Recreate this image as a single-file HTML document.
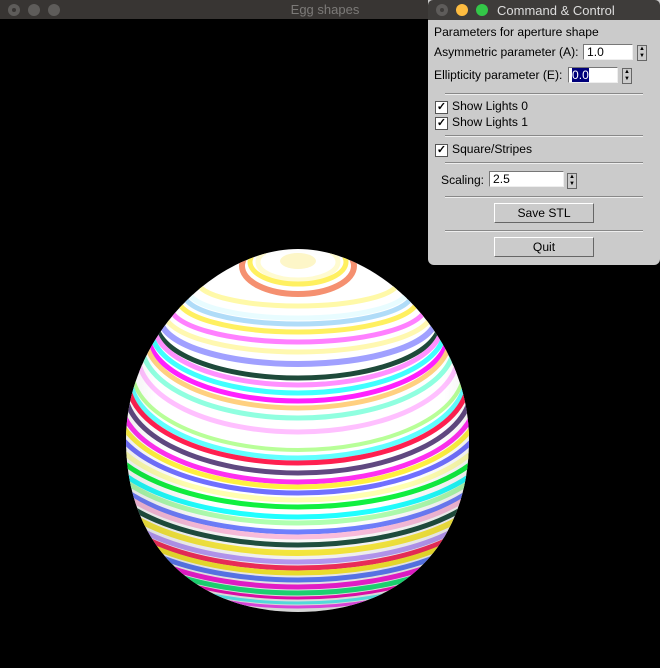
<!DOCTYPE html>
<html><head><meta charset="utf-8"><style>
body{margin:0;width:660px;height:668px;background:#000;position:relative;overflow:hidden;font-family:"Liberation Sans",sans-serif}
.tb{position:absolute;left:0;top:0;width:660px;height:19px;background:#383533}
.dot{position:absolute;top:4px;width:12px;height:12px;border-radius:50%;background:#5e5c5a}
.t1{position:absolute;left:0;width:660px;top:2px;text-align:center;color:#7c7a78;font-size:13px}
#cc{position:absolute;left:428px;top:0;width:232px;height:265px;background:#cbcbcb;border-radius:0 0 6px 6px;font-size:12.1px;color:#000}
#cc .bar{position:absolute;left:0;top:0;width:232px;height:20px;background:#3e3c3a;border-radius:5px 5px 0 0}
.l{position:absolute;white-space:nowrap}
.in{position:absolute;height:16px;background:#fff;border:1px solid #777;border-right-color:#eee;border-bottom-color:#eee;font-size:12.1px;line-height:15px;padding-left:3px;box-sizing:border-box}
.sp{position:absolute;width:10px;height:16px;background:#ccc;border:1px solid #666;box-sizing:border-box;font-size:6px;line-height:7px;text-align:center}
.hr{position:absolute;left:17px;width:198px;height:1px;background:#888;border-bottom:1px solid #eee}
.cb{position:absolute;left:7px;width:11px;height:11px;background:#fff;border:1px solid #555;font-size:11px;line-height:11px;text-align:center;font-weight:bold}
.btn{position:absolute;left:66px;width:100px;height:20px;border:1px solid #666;border-top-color:#fff;border-left-color:#fff;box-sizing:border-box;text-align:center;line-height:18px;background:#cbcbcb}
</style></head><body>
<div class="tb">
<div class="dot" style="left:8px"><div style="position:absolute;left:4px;top:4px;width:4px;height:4px;border-radius:50%;background:#383533"></div></div>
<div class="dot" style="left:28px"></div><div class="dot" style="left:48px"></div>
<div class="t1" style="left:-5px">Egg shapes</div>
</div>
<svg width="660" height="668" style="position:absolute;left:0;top:0">
<defs>
<clipPath id="egg"><path d="M298,249 C218,249 126,335 126,440 C126,545 195,612 298,612 C401,612 469,545 469,440 C469,335 378,249 298,249 Z"/></clipPath>
<radialGradient id="sh" cx="0.5" cy="0.4" r="0.6"><stop offset="0.6" stop-color="#000" stop-opacity="0"/><stop offset="1" stop-color="#000" stop-opacity="0.18"/></radialGradient>
</defs>
<g clip-path="url(#egg)">
<rect x="100" y="240" width="400" height="380" fill="#fff"/>
<ellipse cx="298" cy="261" rx="18" ry="8" fill="#fdf6c8"/>
<g fill="none" stroke-width="5">
<ellipse cx="298" cy="262" rx="40" ry="18" stroke="#fffbd0" />
<ellipse cx="298" cy="262" rx="48" ry="22" stroke="#fff060" />
<ellipse cx="298" cy="266" rx="56" ry="28" stroke="#f59070" stroke-width="6"/>
<path d="M198,282 A100 24 0 0 0 398,282" stroke="#fff9a8"/>
<path d="M188,290 A110 28 0 0 0 408,290" stroke="#e8fcff"/>
<path d="M184,294 A114 30 0 0 0 412,294" stroke="#b0dcf8"/>
<path d="M178,299 A120 33 0 0 0 418,299" stroke="#fff060"/>
<path d="M170,306 A128 36 0 0 0 426,306" stroke="#ff80ff"/>
<path d="M164,312 A134 40 0 0 0 432,312" stroke="#fff8b0"/>
<path d="M160,318 A138 46 0 0 0 436,318" stroke="#a0a0ff" stroke-width="6"/>
<path d="M156,322 A142 56 0 0 0 440,322" stroke="#1e4a3a" stroke-width="5"/>
<path d="M154,325 A144 60 0 0 0 442,325" stroke="#ff90ff"/>
<path d="M151,329 A147 64 0 0 0 445,329" stroke="#40ffff"/>
<path d="M148,334 A150 67 0 0 0 448,334" stroke="#ff20ff" stroke-width="5"/>
<path d="M146,338 A152 70 0 0 0 450,338" stroke="#ffd080"/>
<path d="M142,345 A156 73 0 0 0 454,345" stroke="#90ffe0"/>
<path d="M138,355 A160 77 0 0 0 458,355" stroke="#ffc0ff"/>
<path d="M132,370 A166 80 0 0 0 464,370" stroke="#b8ff98" stroke-width="4"/>
<path d="M130,376 A168 82 0 0 0 466,376" stroke="#60ffff"/>
<path d="M128,381 A170 82 0 0 0 468,381" stroke="#ff2050"/>
<path d="M125,390 A173 83 0 0 0 471,390" stroke="#604880" stroke-width="5"/>
<path d="M120,398 A178 84 0 0 0 476,398" stroke="#ff30f0"/>
<path d="M116,403 A182 84 0 0 0 480,403" stroke="#fff040"/>
<path d="M110,409 A188 84 0 0 0 486,409" stroke="#7070ff"/>
<path d="M105,416 A193 84 0 0 0 491,416" stroke="#ffffb0"/>
<path d="M100,423 A198 84 0 0 0 496,423" stroke="#10f040"/>
<path d="M98,433 A200 84 0 0 0 498,433" stroke="#20ffff"/>
<path d="M98,439 A200 84 0 0 0 498,439" stroke="#b0ffb0"/>
<path d="M98,448 A200 84 0 0 0 498,448" stroke="#7080ff"/>
<path d="M98,453 A200 84 0 0 0 498,453" stroke="#ffc0e0"/>
<path d="M98,461 A200 84 0 0 0 498,461" stroke="#205040"/>
<path d="M98,469 A200 84 0 0 0 498,469" stroke="#fff040" stroke-width="6"/>
<path d="M98,478 A200 84 0 0 0 498,478" stroke="#c0a0ff"/>
<path d="M98,484 A200 84 0 0 0 498,484" stroke="#ff3060"/>
<path d="M98,489 A200 84 0 0 0 498,489" stroke="#fff030"/>
<path d="M98,496 A200 84 0 0 0 498,496" stroke="#6080ff"/>
<path d="M98,503 A200 84 0 0 0 498,503" stroke="#ff20e0"/>
<path d="M98,509 A200 84 0 0 0 498,509" stroke="#20f080"/>
<path d="M98,514 A200 84 0 0 0 498,514" stroke="#ff10c0" stroke-width="3"/>
<path d="M98,519 A200 84 0 0 0 498,519" stroke="#60ffff" stroke-width="3"/>
<path d="M98,523 A200 84 0 0 0 498,523" stroke="#ff50ff" stroke-width="3"/>
</g>
<rect x="100" y="240" width="400" height="380" fill="url(#sh)"/>
</g>
</svg>
<div id="cc">
<div class="bar">
<div class="dot" style="left:8px;background:#5e5c5a"><div style="position:absolute;left:4px;top:4px;width:4px;height:4px;border-radius:50%;background:#3e3c3a"></div></div>
<div class="dot" style="left:28px;background:#fdbc40"></div>
<div class="dot" style="left:48px;background:#33c748"></div>
<div class="l" style="left:69px;top:3px;color:#ddd;font-size:13px">Command &amp; Control</div>
</div>
<div class="l" style="left:6px;top:25px">Parameters for aperture shape</div>
<div class="l" style="left:6px;top:45px">Asymmetric parameter (A):</div>
<div class="in" style="left:155px;top:44px;width:50px">1.0</div>
<div class="sp" style="left:209px;top:45px">▲<br>▼</div>
<div class="l" style="left:6px;top:68px">Ellipticity parameter (E):</div>
<div class="in" style="left:140px;top:67px;width:50px"><span style="background:#00007a;color:#fff">0.0</span></div>
<div class="sp" style="left:194px;top:68px">▲<br>▼</div>
<div class="hr" style="top:93px"></div>
<div class="cb" style="top:101px">✓</div><div class="l" style="left:24px;top:99px">Show Lights 0</div>
<div class="cb" style="top:117px">✓</div><div class="l" style="left:24px;top:115px">Show Lights 1</div>
<div class="hr" style="top:135px"></div>
<div class="cb" style="top:144px">✓</div><div class="l" style="left:24px;top:142px">Square/Stripes</div>
<div class="hr" style="top:162px"></div>
<div class="l" style="left:13px;top:173px">Scaling:</div>
<div class="in" style="left:61px;top:171px;width:75px">2.5</div>
<div class="sp" style="left:139px;top:173px">▲<br>▼</div>
<div class="hr" style="top:196px"></div>
<div class="btn" style="top:203px">Save STL</div>
<div class="hr" style="top:230px"></div>
<div class="btn" style="top:237px">Quit</div>
</div>
</body></html>
